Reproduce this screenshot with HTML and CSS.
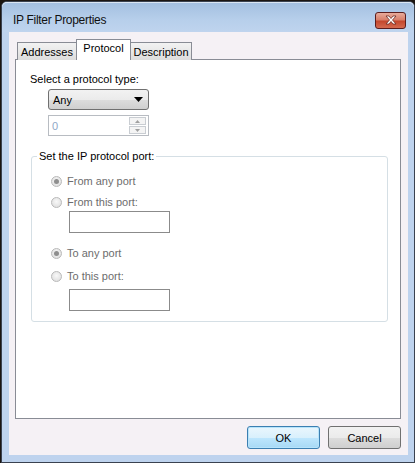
FILE: index.html
```html
<!DOCTYPE html>
<html>
<head>
<meta charset="utf-8">
<link rel="stylesheet" href="styles.css">
</head>
<body>
<div class="desk">
  <div class="window">
    <div class="titlebar">
      <span class="title">IP Filter Properties</span>
      <div class="close">
        <svg width="18" height="10" viewBox="0 0 18 10">
          <path d="M4 1 L7 1 L9 3.5 L11 1 L14 1 L10.5 5 L14 9 L11 9 L9 6.5 L7 9 L4 9 L7.5 5 Z" fill="#fff" stroke="#6b2a22" stroke-width="0.8"/>
        </svg>
      </div>
    </div>
    <div class="client">
      <div class="tabs">
        <div class="tab t1">Addresses</div>
        <div class="tab t2 sel">Protocol</div>
        <div class="tab t3">Description</div>
      </div>
      <div class="panel">
        <div class="label">Select a protocol type:</div>
        <div class="combo">
          <span>Any</span>
          <svg width="9" height="5" viewBox="0 0 9 5"><path d="M0 0 H9 L4.5 5 Z" fill="#000"/></svg>
        </div>
        <div class="spin">
          <span>0</span>
          <div class="spinbtns">
            <div class="sb"><svg width="5" height="3" viewBox="0 0 5 3"><path d="M0 3 L2.5 0 L5 3 Z" fill="#a0a0a0"/></svg></div>
            <div class="sb"><svg width="5" height="3" viewBox="0 0 5 3"><path d="M0 0 L2.5 3 L5 0 Z" fill="#a0a0a0"/></svg></div>
          </div>
        </div>
        <div class="group">
          <span class="legend">Set the IP protocol port:</span>
          <div class="radio"><span class="rb on"></span><span>From any port</span></div>
          <div class="radio r2"><span class="rb"></span><span>From this port:</span></div>
          <div class="tbox t-a"></div>
          <div class="radio r3"><span class="rb on"></span><span>To any port</span></div>
          <div class="radio r4"><span class="rb"></span><span>To this port:</span></div>
          <div class="tbox t-b"></div>
        </div>
      </div>
      <div class="buttons">
        <button class="btn def">OK</button>
        <button class="btn">Cancel</button>
      </div>
    </div>
  </div>
</div>
</body>
</html>
```

FILE: styles.css
```css
html, body {
  margin: 0;
  padding: 0;
  width: 415px;
  height: 463px;
  overflow: hidden;
  background: #1b1511;
}
.desk {
  padding: 1px 0 0 1px;
}
.window {
  width: 412px;
  height: 460px;
  border: 1px solid #3a4250;
  border-radius: 6px 6px 0 0;
  background: #bed3ee;
  display: flex;
  flex-direction: column;
  font-family: "Liberation Sans", Arial, sans-serif;
  font-size: 11px;
}
.titlebar {
  height: 30px;
  display: flex;
  align-items: center;
  justify-content: space-between;
  padding: 0 8px 0 11px;
  background: linear-gradient(#a3bfe0, #b7cfeb 60%, #bfd4ee);
  border-radius: 5px 5px 0 0;
  box-shadow: inset 0 1px 0 #dbe6f3;
}
.title {
  font-size: 12px;
  letter-spacing: -0.3px;
  color: #111;
  margin-top: 5px;
}
.close {
  width: 29px;
  height: 15px;
  margin-top: 6px;
  border: 1px solid #5b1d1d;
  border-radius: 3px;
  background: linear-gradient(#e8ab9b, #d8806b 45%, #c4472d 55%, #d46a50);
  display: flex;
  align-items: center;
  justify-content: center;
}
.client {
  margin: 0 6px 0 7px;
  height: 423px;
  background: #f5f1f5;
  display: flex;
  flex-direction: column;
}
.tabs {
  display: flex;
  align-items: flex-end;
  margin: 7px 0 0 8px;
  height: 21px;
  position: relative;
  z-index: 1;
}
.tab {
  box-sizing: border-box;
  height: 18px;
  border: 1px solid #898c95;
  border-bottom: none;
  background: linear-gradient(#f2f2f2, #e8e8e8 50%, #dcdcdc);
  line-height: 18px;
  text-align: center;
  color: #000;
  margin-right: -1px;
}
.t1 { width: 60px; }
.t2 { width: 55px; }
.t3 { width: 62px; }
.tab.sel {
  height: 21px;
  background: #fff;
  line-height: 17px;
  position: relative;
  z-index: 2;
}
.panel {
  margin: -1px 7px 0 6px;
  height: 358px;
  border: 1px solid #898c95;
  background: #fff;
}
.label {
  margin: 13px 0 0 14px;
  line-height: 13px;
  color: #000;
}
.combo {
  margin: 3px 0 0 32px;
  width: 99px;
  height: 19px;
  border: 1px solid #707070;
  border-radius: 3px;
  background: linear-gradient(#f2f2f2, #ebebeb 50%, #dddddd 51%, #cfcfcf);
  display: flex;
  align-items: center;
  justify-content: space-between;
}
.combo span { margin-left: 4px; }
.combo svg { margin-right: 5px; }
.spin {
  margin: 5px 0 0 32px;
  width: 99px;
  height: 19px;
  border: 1px solid #b8bcc2;
  background: #fff;
  display: flex;
  align-items: center;
  justify-content: space-between;
}
.spin span {
  margin-left: 3px;
  color: #8fa8c8;
}
.spinbtns {
  display: flex;
  flex-direction: column;
  gap: 1px;
  margin-right: 2px;
}
.sb {
  width: 15px;
  height: 6px;
  border: 1px solid #c9cdd2;
  background: #f4f4f4;
  display: flex;
  align-items: center;
  justify-content: center;
}
.group {
  position: relative;
  box-sizing: border-box;
  margin: 20px 12px 0 15px;
  height: 166px;
  border: 1px solid #d5dfe5;
  border-radius: 3px;
  padding: 19px 0 0 19px;
}
.legend {
  position: absolute;
  top: -8px;
  left: 5px;
  padding: 0 2px;
  line-height: 14px;
  background: #fff;
  color: #000;
}
.radio {
  display: flex;
  align-items: center;
  gap: 5px;
  height: 11px;
  line-height: 13px;
  color: #6d6d6d;
}
.r2 { margin-top: 10px; }
.r3 { margin-top: 15px; }
.r4 { margin-top: 12px; }
.rb {
  flex: none;
  width: 9px;
  height: 9px;
  border-radius: 50%;
  border: 1px solid #b9b9b9;
  background: radial-gradient(circle at 50% 40%, #f8f8f8, #dadada);
  position: relative;
}
.rb.on::after {
  content: "";
  position: absolute;
  left: 2px;
  top: 2px;
  width: 5px;
  height: 5px;
  border-radius: 50%;
  background: #8e8e8e;
}
.tbox {
  margin-left: 18px;
  width: 99px;
  height: 20px;
  border: 1px solid #8b8b8b;
  background: #fff;
}
.t-a { margin-top: 3px; }
.t-b { margin-top: 7px; }
.buttons {
  display: flex;
  justify-content: flex-end;
  gap: 8px;
  margin: 7px 7px 0 0;
}
.btn {
  width: 73px;
  height: 23px;
  font-family: "Liberation Sans", Arial, sans-serif;
  font-size: 11px;
  color: #000;
  border: 1px solid #707070;
  border-radius: 3px;
  background: linear-gradient(#f2f2f2, #ebebeb 50%, #dddddd 51%, #cfcfcf);
  padding: 0;
}
.btn.def {
  border-color: #3c7fb1;
  background: linear-gradient(#eaf6fd, #d9f0fc 50%, #bee6fd 51%, #a7d9f5);
  box-shadow: inset 0 0 0 1px #b7e4fb;
}
```
